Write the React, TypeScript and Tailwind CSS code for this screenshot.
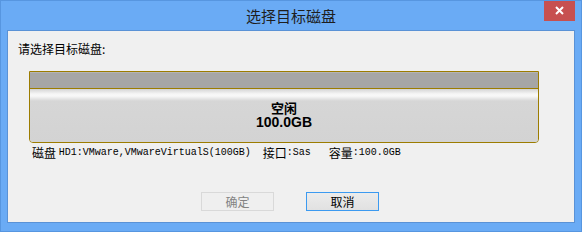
import React from 'react';

const cjk = '"Noto Sans CJK SC", "Liberation Sans", sans-serif';
const mono = '"Liberation Mono", monospace';

export default function App() {
  return (
    <div
      className="w-[582px] h-[232px] flex flex-col bg-[#6aabf5] border border-[#5796e0] overflow-hidden"
      style={{ fontFamily: cjk }}
    >
      {/* title bar */}
      <div className="relative h-[29px] flex items-center justify-center shrink-0">
        <span className="text-[15px] text-[#1e1e1e] leading-none">选择目标磁盘</span>
        <button className="absolute right-[6px] top-[-1px] w-[31px] h-[21px] bg-[#c75050] flex items-center justify-center">
          <svg width="9" height="9" viewBox="0 0 9 9">
            <path d="M1 1 L8 8 M8 1 L1 8" stroke="#fff" strokeWidth="2" />
          </svg>
        </button>
      </div>

      {/* client area */}
      <div className="flex-1 mx-[6px] mb-[8px] bg-[#f0f0f0] border border-[#5a92d6] flex flex-col">
        <div className="pl-[10px] pt-[10px] text-[12px] leading-[16px] text-black">请选择目标磁盘:</div>

        <div className="mt-[14px] ml-[21px] w-[510px] h-[72px] border border-[#9c7c00] rounded-b-[4px] flex flex-col overflow-hidden shrink-0">
          <div className="h-[17px] bg-[#a6a6a6] border-b border-[#9c7c00] shrink-0 border-t border-t-[#b4b4b4]" />
          <div className="flex-1 bg-[linear-gradient(to_bottom,#d4d4d4_0px,#f6f6f6_5px,#f8f8f8_7px,#d6d6d6_12px,#d3d3d3_100%)] flex flex-col items-center pt-[11px]">
            <div className="text-[13px] font-bold leading-[15px] text-black">空闲</div>
            <div className="text-[14px] font-bold leading-[15px] text-black" style={{ fontFamily: '"Liberation Sans", sans-serif' }}>
              100.0GB
            </div>
          </div>
        </div>

        <div className="ml-[24px] mt-[2px] text-[12px] leading-[16px] text-black flex items-center whitespace-pre">
          <span>磁盘 </span>
          <span className="text-[10px]" style={{ fontFamily: mono }}>HD1:VMware,VMwareVirtualS(100GB)  </span>
          <span>接口</span>
          <span className="text-[10px]" style={{ fontFamily: mono }}>:Sas   </span>
          <span>容量</span>
          <span className="text-[10px]" style={{ fontFamily: mono }}>:100.0GB</span>
        </div>

        <div className="flex mt-[31px] ml-[193px] gap-[32px]">
          <button
            disabled
            className="w-[73px] h-[19px] border border-[#d9d9d9] bg-[#efefef] text-[12px] leading-none text-[#838383] flex items-center justify-center"
          >
            确定
          </button>
          <button className="w-[73px] h-[19px] border border-[#3c9af0] bg-[linear-gradient(to_bottom,#ececec,#e1e1e1)] text-[12px] leading-none text-black flex items-center justify-center">
            取消
          </button>
        </div>
      </div>
    </div>
  );
}
